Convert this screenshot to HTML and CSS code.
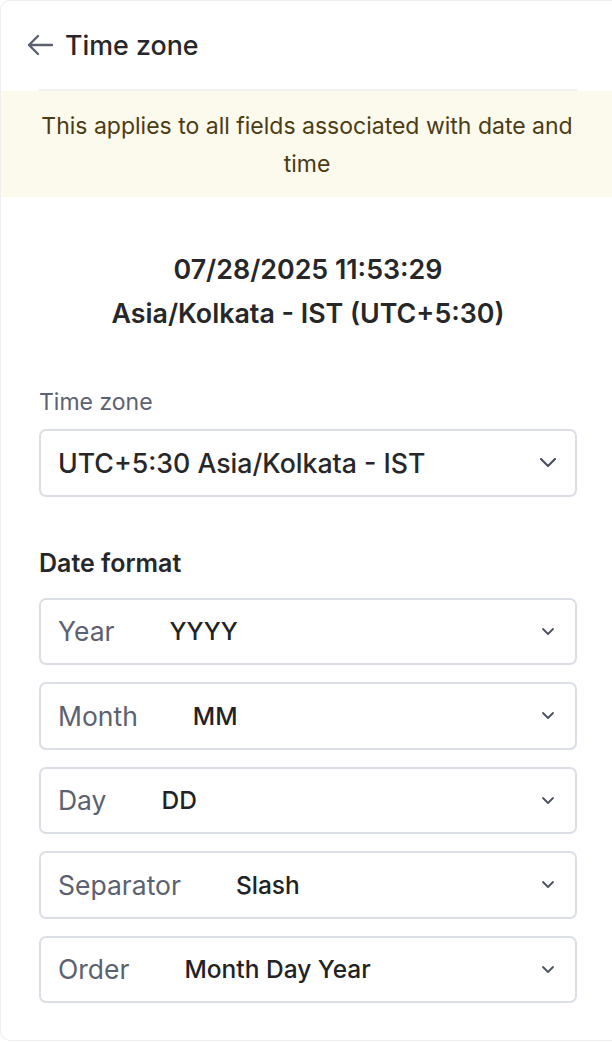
FILE: index.html
```html
<!DOCTYPE html>
<html lang="en">
<head>
<meta charset="utf-8">
<title>Time zone</title>
<link rel="stylesheet" href="styles.css">
</head>
<body>
<div class="panel">
  <header class="header">
    <svg class="back" width="28" height="22" viewBox="0 0 28 22" fill="none" stroke="#5b6170" stroke-width="2.4" stroke-linecap="round" stroke-linejoin="round"><path d="M26 11H3M12 2L3 11l9 9"/></svg>
    <h1 class="title">Time zone</h1>
  </header>
  <div class="divider"></div>
  <div class="banner">This applies to all fields associated with date and time</div>
  <div class="content">
    <div class="now">
      <div>07/28/2025 11:53:29</div>
      <div>Asia/Kolkata - IST (UTC+5:30)</div>
    </div>
    <div class="field-label">Time zone</div>
    <div class="select select-tz">
      <span class="select-value">UTC+5:30 Asia/Kolkata - IST</span>
      <svg class="chev-lg" width="18" height="11" viewBox="0 0 18 11" fill="none" stroke="#4b5160" stroke-width="2.2" stroke-linecap="round" stroke-linejoin="round"><path d="M2 2l7 7 7-7"/></svg>
    </div>
    <div class="section-title">Date format</div>
    <div class="format-list">
      <div class="select">
        <span class="opt-label">Year</span><span class="opt-value">YYYY</span>
        <svg class="chev-sm" width="14" height="9" viewBox="0 0 14 9" fill="none" stroke="#4b5160" stroke-width="1.8" stroke-linecap="round" stroke-linejoin="round"><path d="M2 2l5 5 5-5"/></svg>
      </div>
      <div class="select">
        <span class="opt-label">Month</span><span class="opt-value">MM</span>
        <svg class="chev-sm" width="14" height="9" viewBox="0 0 14 9" fill="none" stroke="#4b5160" stroke-width="1.8" stroke-linecap="round" stroke-linejoin="round"><path d="M2 2l5 5 5-5"/></svg>
      </div>
      <div class="select">
        <span class="opt-label">Day</span><span class="opt-value">DD</span>
        <svg class="chev-sm" width="14" height="9" viewBox="0 0 14 9" fill="none" stroke="#4b5160" stroke-width="1.8" stroke-linecap="round" stroke-linejoin="round"><path d="M2 2l5 5 5-5"/></svg>
      </div>
      <div class="select">
        <span class="opt-label">Separator</span><span class="opt-value">Slash</span>
        <svg class="chev-sm" width="14" height="9" viewBox="0 0 14 9" fill="none" stroke="#4b5160" stroke-width="1.8" stroke-linecap="round" stroke-linejoin="round"><path d="M2 2l5 5 5-5"/></svg>
      </div>
      <div class="select">
        <span class="opt-label">Order</span><span class="opt-value">Month Day Year</span>
        <svg class="chev-sm" width="14" height="9" viewBox="0 0 14 9" fill="none" stroke="#4b5160" stroke-width="1.8" stroke-linecap="round" stroke-linejoin="round"><path d="M2 2l5 5 5-5"/></svg>
      </div>
    </div>
  </div>
</div>
</body>
</html>
```
FILE: styles.css
```css
* { box-sizing: border-box; }
html, body { margin: 0; padding: 0; background: #ffffff; }
body {
  font-family: Inter, "Noto Sans", "Liberation Sans", sans-serif;
  color: #27272a;
  overflow: hidden;
}
.panel {
  width: 620px;
  height: 1041px;
  border: 1.5px solid #efefef;
  border-right: none;
  border-radius: 10px 0 0 10px;
  background: #fff;
}
.header {
  height: 88px;
  display: flex;
  align-items: center;
  padding-left: 25px;
  gap: 11px;
}
.back { display: block; }
.title {
  margin: 0;
  font-size: 26.8px;
  font-weight: 500;
  line-height: 34px;
  color: #27272a;
}
.divider {
  height: 2px;
  margin: 0 43px 0 38px;
  background: #f1f1f4;
}
.banner {
  width: 612px;
  background: #fcf9ed;
  color: #4b3c13;
  font-size: 23px;
  line-height: 38px;
  text-align: center;
  padding: 16px 30px 14px;
}
.content {
  width: 612px;
  padding: 50px 36px 0 38px;
}
.now {
  text-align: center;
  font-size: 26.8px;
  font-weight: 600;
  line-height: 44px;
  color: #27272a;
}
.field-label {
  margin-top: 53px;
  font-size: 23px;
  line-height: 28px;
  color: #5b6170;
}
.select {
  height: 67.5px;
  border: 2px solid #dcdee5;
  border-radius: 7px;
  display: flex;
  align-items: center;
  padding: 0 20px 0 17px;
}
.select-tz { margin-top: 13px; }
.select-value {
  flex: 1;
  font-size: 26.7px;
  font-weight: 500;
  color: #27272a;
}
.chev-lg { margin-right: -2px; }
.section-title {
  margin-top: 52px;
  font-size: 25px;
  font-weight: 600;
  line-height: 28px;
  color: #27272a;
}
.format-list {
  margin-top: 21px;
  display: flex;
  flex-direction: column;
  gap: 17px;
}
.opt-label {
  font-size: 26.5px;
  color: #5b6170;
  margin-right: 55px;
}
.opt-value {
  flex: 1;
  font-size: 24.5px;
  font-weight: 500;
  color: #222226;
}
```
